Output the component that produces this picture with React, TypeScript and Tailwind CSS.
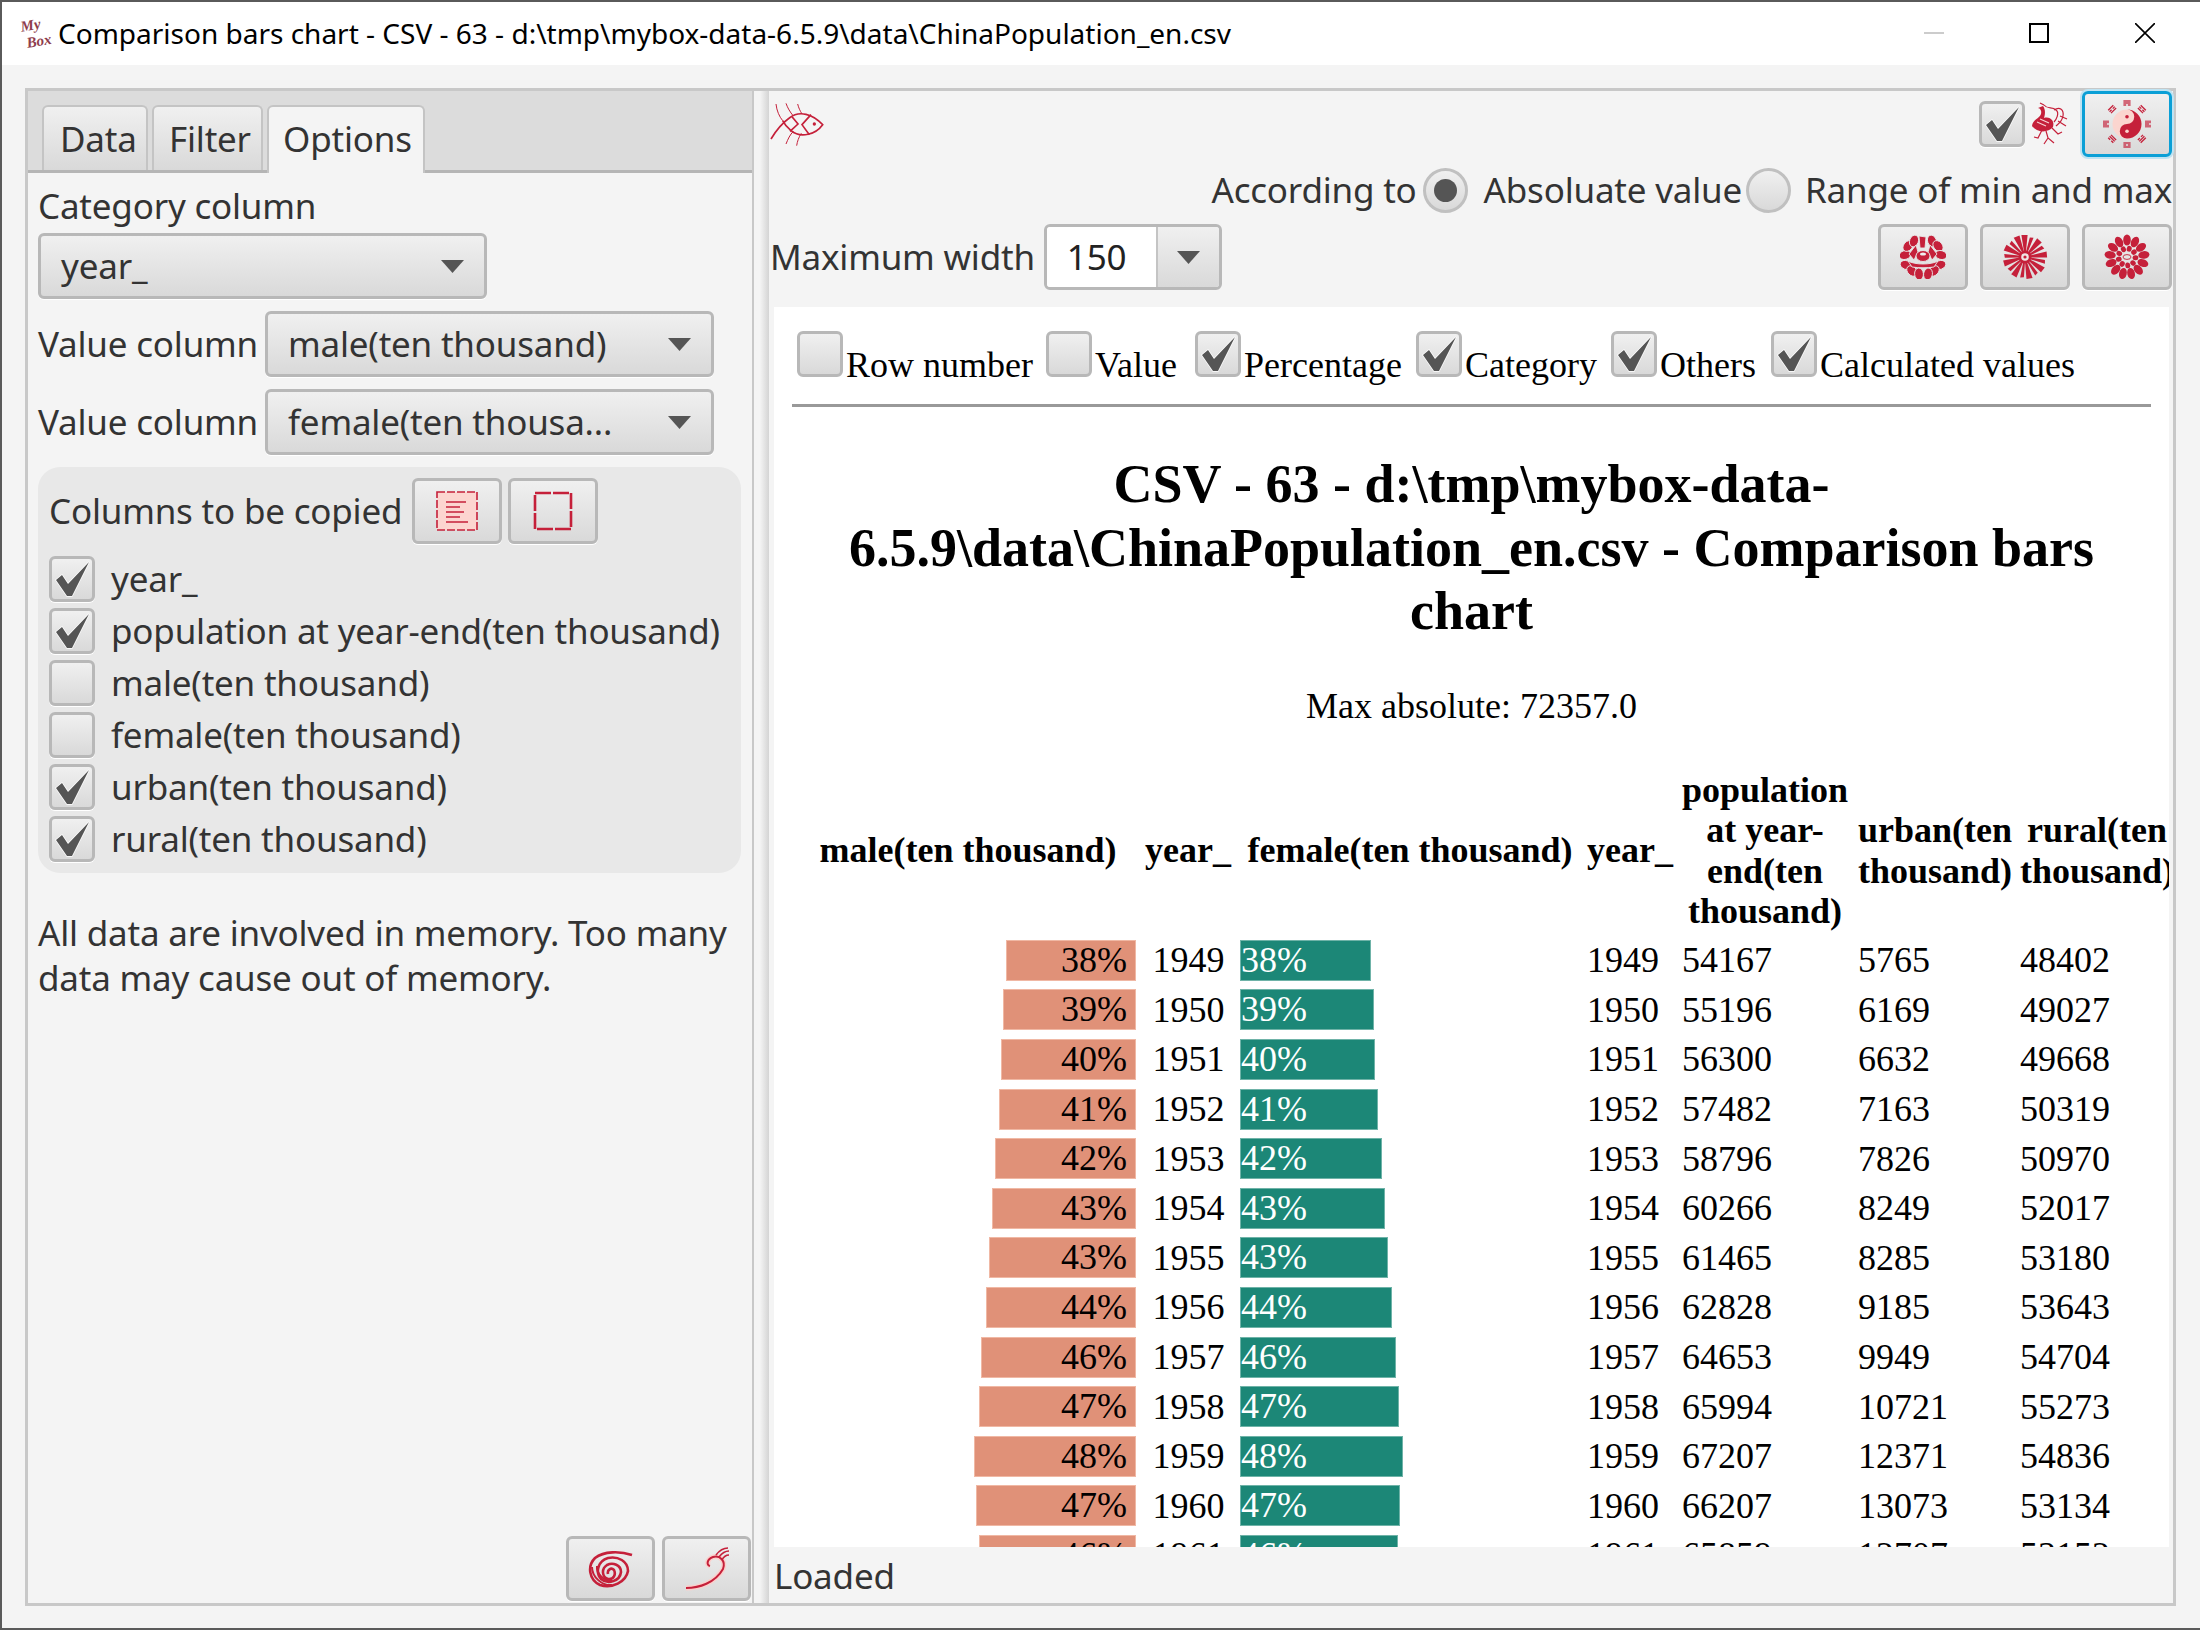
import type { ReactNode } from "react";

const red = "#c5203a";
const ui = "font-['Noto_Sans',sans-serif]";
const btn = "flex items-center justify-center rounded-[6px] border-[3px] border-[#b8b8b8] bg-linear-to-b from-[#f0f0f0] to-[#d9d9d9] shadow-[0_1px_0_#fff]";

const rows = [
  { year: 1949, pct: 38, male: 130, female: 131, pop: 54167, urban: 5765, rural: 48402 },
  { year: 1950, pct: 39, male: 133, female: 134, pop: 55196, urban: 6169, rural: 49027 },
  { year: 1951, pct: 40, male: 135, female: 135, pop: 56300, urban: 6632, rural: 49668 },
  { year: 1952, pct: 41, male: 137, female: 138, pop: 57482, urban: 7163, rural: 50319 },
  { year: 1953, pct: 42, male: 141, female: 142, pop: 58796, urban: 7826, rural: 50970 },
  { year: 1954, pct: 43, male: 144, female: 145, pop: 60266, urban: 8249, rural: 52017 },
  { year: 1955, pct: 43, male: 147, female: 148, pop: 61465, urban: 8285, rural: 53180 },
  { year: 1956, pct: 44, male: 150, female: 152, pop: 62828, urban: 9185, rural: 53643 },
  { year: 1957, pct: 46, male: 155, female: 156, pop: 64653, urban: 9949, rural: 54704 },
  { year: 1958, pct: 47, male: 157, female: 159, pop: 65994, urban: 10721, rural: 55273 },
  { year: 1959, pct: 48, male: 162, female: 163, pop: 67207, urban: 12371, rural: 54836 },
  { year: 1960, pct: 47, male: 160, female: 160, pop: 66207, urban: 13073, rural: 53134 },
  { year: 1961, pct: 46, male: 157, female: 158, pop: 65859, urban: 12707, rural: 53152 },
];

const Check = ({ on }: { on?: boolean }) => (
  <div className={`${btn} w-[46px] h-[46px] shrink-0`}>
    {on && (
      <svg width="40" height="40" viewBox="0 0 40 40">
        <path d="M4 21 L10 16 L16 25 L37 3 L20 37 L15 37 Z" fill="#555" stroke="#fff" strokeWidth="1.5" paintOrder="stroke" />
      </svg>
    )}
  </div>
);

const Arrow = () => (
  <svg width="23" height="13" viewBox="0 0 23 13" className="shrink-0">
    <path d="M0 0 H23 L11.5 13 Z" fill="#555" />
  </svg>
);

const Combo = ({ text, w }: { text: string; w: string }) => (
  <div className={`${btn} ${w} h-[66px] !justify-between pl-[20px] pr-[20px] text-[#333]`}>
    <span>{text}</span>
    <Arrow />
  </div>
);

const Radio = ({ on }: { on?: boolean }) => (
  <div className="flex items-center justify-center w-[45px] h-[45px] rounded-full border-[3px] border-[#c0c0c0] bg-linear-to-b from-[#f0f0f0] to-[#d9d9d9] shrink-0">
    {on && <div className="w-[23px] h-[23px] rounded-full bg-[#555]" />}
  </div>
);

const Fish = () => (
  <svg width="70" height="60" viewBox="0 0 210 180" fill="none" stroke={red} strokeWidth="5" className="-ml-[3px]">
    <path d="M15 135 C30 110 45 90 70 72 C100 48 140 60 170 92 C150 120 105 135 75 110 C65 102 55 90 50 80" />
    <path d="M30 30 C32 50 40 68 50 80" strokeWidth="3" />
    <path d="M60 28 C65 42 72 54 82 66" strokeWidth="3" />
    <path d="M95 30 C98 42 102 50 108 60" strokeWidth="3" />
    <path d="M78 68 L96 90 L72 112" />
    <path d="M135 62 L108 92 L130 122" />
    <path d="M60 150 C66 135 72 122 82 112" strokeWidth="3" />
    <path d="M92 155 C94 142 98 130 106 118" strokeWidth="3" />
    <circle cx="145" cy="90" r="5" fill={red} stroke="none" />
  </svg>
);

const Bird = () => (
  <svg width="38" height="44" viewBox="0 0 38 44" fill="none" stroke={red} strokeWidth="1.2" className="ml-[5px]">
    <path d="M2 24 C3 17 9 17 11 12 C12 9 10 6 8 6 L13 4 C16 8 15 13 14 16 C20 14 25 19 23 25 C18 31 7 31 2 24 Z" fill={red} stroke="none" />
    <path d="M10 1 L14 3 M14 3 C18 8 22 4 26 8 C30 11 26 18 24 20" />
    <path d="M24 8 C30 4 34 8 33 14 C32 20 28 22 26 24 M30 14 L37 17 M28 19 L36 24" />
    <path d="M12 28 L8 36 L4 35 M16 29 L18 36 L24 41 M18 36 L14 42 M22 26 L28 32 L32 30" />
    <path d="M7 20 L16 24 M10 17 L19 21" stroke="#f6d5d5" />
  </svg>
);

const trigrams = [0, 45, 90, 135, 180, 225, 270, 315];
const YinYang = () => (
  <svg width="64" height="64" viewBox="-32 -32 64 64">
    {trigrams.map((a, i) => (
      <g key={a} transform={`rotate(${a}) translate(0 -21)`} stroke={red} strokeWidth="1.3">
        {[-2, 0, 2].map((y, j) =>
          (i + j) % 3 === 2 ? (
            <g key={y}>
              <line x1="-3.6" x2="-0.8" y1={y} y2={y} />
              <line x1="0.8" x2="3.6" y1={y} y2={y} />
            </g>
          ) : (
            <line key={y} x1="-3.6" x2="3.6" y1={y} y2={y} />
          ),
        )}
      </g>
    ))}
    <circle r="14.5" fill="#fbd5cf" />
    <path d="M0 -14.5 A14.5 14.5 0 0 1 0 14.5 A7.25 7.25 0 0 1 0 0 A7.25 7.25 0 0 0 0 -14.5 Z" fill={red} />
    <circle cy="-7.25" r="1.8" fill={red} />
    <circle cy="7.25" r="1.8" fill="#fbd5cf" />
  </svg>
);

const Peony = () => (
  <svg width="46" height="44" viewBox="-23 -22 46 44" fill={red} stroke="#e8e8e8" strokeWidth="0.9">
    {[
      [-18, -2, 75], [-15, -11, 40], [-9, -16, 20], [9, -16, -20], [15, -11, -40], [18, -2, -75],
      [-17, 8, 110], [17, 8, -110], [-11, 14, 135], [11, 14, -135], [-4, 17, 175], [5, 17, -170],
    ].map(([x, y, a]) => (
      <ellipse key={`${x}${y}`} rx="4.4" ry="6" transform={`translate(${x} ${y}) rotate(${a})`} />
    ))}
    <path d="M-4 -21 L3 -20 L2 -9 L-3 -9 Z" />
    <path d="M-14 -3 L-7 -12 L-5 -5 L-9 3 Z M14 -3 L7 -12 L5 -5 L9 3 Z" />
    <path d="M-15 4 C-8 8 8 8 15 4 L11 10 C4 11 -4 11 -11 10 Z" />
    <ellipse cy="-1" rx="7" ry="5.5" />
    <ellipse cy="-3" rx="3" ry="1.6" fill="#eee" stroke="none" />
  </svg>
);

const Aster = () => (
  <svg width="46" height="46" viewBox="-23 -23 46 46" fill={red}>
    {Array.from({ length: 17 }, (_, i) => i * (360 / 17)).map((a, i) => (
      <path key={a} d={`M-0.8 -4 L-${i % 2 ? 2.6 : 3.6} -${i % 2 ? 20 : 22} L${i % 2 ? 1 : 2.6} -${i % 2 ? 21 : 22} L0.8 -4 Z`} transform={`rotate(${a})`} />
    ))}
    <circle r="6.5" />
    <circle r="3.8" fill="#efe6e6" />
    <circle r="1.6" />
  </svg>
);

const Dahlia = () => (
  <svg width="46" height="46" viewBox="-23 -23 46 46" fill={red}>
    {Array.from({ length: 13 }, (_, i) => i * (360 / 13)).map((a) => (
      <ellipse key={a} cy="-17" rx="3.8" ry="5.6" transform={`rotate(${a})`} />
    ))}
    {Array.from({ length: 9 }, (_, i) => i * 40 + 15).map((a) => (
      <ellipse key={a} cy="-8.5" rx="2.5" ry="2.9" transform={`rotate(${a})`} />
    ))}
    <ellipse rx="4" ry="2.4" fill="none" stroke={red} strokeWidth="0.9" />
  </svg>
);

const Spiral = () => (
  <svg width="46" height="38" viewBox="0 0 46 38" fill="none" stroke={red} strokeWidth="2.6">
    <path d="M44 5 C32 1 16 1 7 8 C-1 16 1 30 12 35 C24 39 38 32 40 21 C40 11 30 6 20 8 C10 11 7 22 13 29 C20 35 32 31 33 22 C33 15 25 12 19 15 C13 19 14 27 20 29 C26 30 28 24 26 20 C23 17 19 20 20 24" />
    <path d="M4 17 C4 27 14 36 24 35 M9 16 C8 24 16 31 24 31" strokeWidth="2" />
  </svg>
);

const Curl = () => (
  <svg width="44" height="44" viewBox="0 0 44 44" fill="none">
    <path d="M1 41 C14 41 30 36 38 22 C41 14 35 8 28 10 C22 12 21 18 25 19" stroke="#fbd0cc" strokeWidth="5" />
    <path d="M1 41 C14 41 30 36 38 22 C41 14 35 8 28 10 C22 12 21 18 25 19" stroke={red} strokeWidth="2" />
    <path d="M31 8 C34 4 38 1 43 1 M34 10 C37 6 40 4 44 4 M37 13 C39 9 41 8 44 8" stroke={red} strokeWidth="1.6" />
  </svg>
);

const Logo = () => (
  <div className="w-[36px] mr-[2px] flex flex-col font-['Liberation_Serif',serif] italic font-bold text-[15px] leading-[17px] text-[#8f3d4c] -rotate-[10deg]">
    <span className="pl-[2px]">My</span>
    <span className="pl-[5px]">Box</span>
  </div>
);

const Row = ({ label, children }: { label?: string; children: ReactNode }) => (
  <div className="flex items-center h-[66px] mt-[12px] ml-[10px]">
    {label && <span className="w-[227px]">{label}</span>}
    {children}
  </div>
);

const columns = [
  { name: "year_", on: true },
  { name: "population at year-end(ten thousand)", on: true },
  { name: "male(ten thousand)", on: false },
  { name: "female(ten thousand)", on: false },
  { name: "urban(ten thousand)", on: true },
  { name: "rural(ten thousand)", on: true },
];

const shown = [
  { name: "Row number", on: false, w: "w-[249px]" },
  { name: "Value", on: false, w: "w-[149px]" },
  { name: "Percentage", on: true, w: "w-[221px]" },
  { name: "Category", on: true, w: "w-[195px]" },
  { name: "Others", on: true, w: "w-[160px]" },
  { name: "Calculated values", on: true, w: "w-[310px]" },
];

const cols = "grid grid-cols-[336px_104px_340px_100px_170px_162px_200px]";

export default function App() {
  return (
    <div className={`${ui} flex flex-col w-[2200px] h-[1630px] bg-[#f4f4f4] border-t-2 border-l-2 border-b-2 border-[#5a5a5a] text-[#333] text-[35px] tracking-[-0.2px] overflow-hidden`}>
      {/* title bar */}
      <div className="flex items-center h-[63px] shrink-0 bg-white pl-[18px] pb-[2px] text-black text-[28px] tracking-normal">
        <Logo />
        <span>Comparison bars chart - CSV - 63 - d:\tmp\mybox-data-6.5.9\data\ChinaPopulation_en.csv</span>
        <div className="ml-auto flex items-center pr-[45px]">
          <div className="w-[20px] h-[2px] bg-[#ccc]" />
          <div className="ml-[85px] w-[20px] h-[20px] border-2 border-black" />
          <svg width="20" height="20" viewBox="0 0 20 20" className="ml-[86px]" stroke="#000" strokeWidth="1.6">
            <path d="M0 0 L20 20 M20 0 L0 20" />
          </svg>
        </div>
      </div>

      <div className="flex h-[1518px] ml-[23px] mr-[24px] mt-[23px] border-[3px] border-[#c8c8c8]">
        {/* left panel */}
        <aside className="flex flex-col w-[726px] shrink-0 h-full border-r-2 border-[#c8c8c8]">
          <div className="flex h-[82px] shrink-0 gap-[4px] pl-[14px] pt-[14px] bg-[#dcdcdc] border-b-[3px] border-[#b5b5b5]">
            <div className="w-[106px] h-[65px] pl-[16px] leading-[64px] rounded-t-[6px] border-[2px] border-b-0 border-[#c4c4c4] bg-linear-to-b from-[#f0f0f0] to-[#d9d9d9]">Data</div>
            <div className="w-[111px] h-[65px] pl-[15px] leading-[64px] rounded-t-[6px] border-[2px] border-b-0 border-[#c4c4c4] bg-linear-to-b from-[#f0f0f0] to-[#d9d9d9]">Filter</div>
            <div className="w-[158px] h-[68px] pl-[14px] leading-[64px] rounded-t-[6px] border-[2px] border-b-0 border-[#c4c4c4] bg-[#f4f4f4]">Options</div>
          </div>

          <div className="ml-[10px] h-[60px] pt-[6px] flex items-center">Category column</div>
          <div className="ml-[10px]">
            <Combo text="year_" w="w-[449px]" />
          </div>
          <Row label="Value column">
            <Combo text="male(ten thousand)" w="w-[449px]" />
          </Row>
          <Row label="Value column">
            <Combo text="female(ten thousa..." w="w-[449px]" />
          </Row>

          <section className="ml-[10px] mt-[12px] w-[703px] h-[406px] shrink-0 rounded-[22px] bg-[#e8e8e8] pl-[11px] pr-[12px] pt-[11px]">
            <div className="flex items-center h-[66px]">
              <span className="w-[363px]">Columns to be copied</span>
              <div className={`${btn} w-[90px] h-[66px]`}>
                <svg width="44" height="42" viewBox="0 0 44 42" fill="#fcd5d0" stroke={red}>
                  <rect x="2" y="2" width="40" height="38" strokeDasharray="8 2" strokeWidth="1.6" />
                  <path d="M11 12 H31 M11 17 H25 M11 22 H29 M11 27 H25 M11 32 H33" strokeWidth="1.6" />
                </svg>
              </div>
              <div className={`${btn} ml-[6px] w-[90px] h-[66px]`}>
                <svg width="40" height="40" viewBox="0 0 40 40" fill="none" stroke={red} strokeWidth="2.6">
                  <rect x="2" y="2" width="36" height="36" strokeDasharray="16 2" />
                </svg>
              </div>
            </div>
            <div className="flex flex-col gap-[6px] mt-[12px]">
              {columns.map((c) => (
                <div key={c.name} className="flex items-center h-[46px] gap-[16px] whitespace-nowrap">
                  <Check on={c.on} />
                  <span>{c.name}</span>
                </div>
              ))}
            </div>
          </section>

          <p className="ml-[10px] mt-[37px] w-[712px] leading-[45px]">All data are involved in memory. Too many data may cause out of memory.</p>

          <div className="mt-auto flex justify-end gap-[7px] pb-[2px] pr-[1px]">
            <div className={`${btn} w-[89px] h-[65px]`}><Spiral /></div>
            <div className={`${btn} w-[89px] h-[65px]`}><Curl /></div>
          </div>
        </aside>

        <div className="w-[15px] shrink-0 bg-linear-to-r from-[#f4f4f4] from-40% to-[#d4d4d4]" />

        {/* right panel */}
        <main className="flex flex-col flex-1 min-w-0 h-full">
          <div className="flex items-center h-[66px] shrink-0 pr-[1px]">
            <Fish />
            <div className="ml-auto flex items-center">
              <Check on />
              <Bird />
              <div className="ml-[14px] w-[90px] h-[66px] flex items-center justify-center rounded-[6px] border-[3px] border-[#0a9fd6] shadow-[0_0_0_2px_#bfe3f2] bg-linear-to-b from-[#f0f0f0] to-[#d9d9d9]">
                <YinYang />
              </div>
            </div>
          </div>

          <div className="flex items-center justify-end h-[45px] mt-[11px] shrink-0 pr-[1px] whitespace-nowrap">
            <span>According to</span>
            <div className="ml-[6px]"><Radio on /></div>
            <span className="ml-[16px]">Absoluate value</span>
            <div className="ml-[4px]"><Radio /></div>
            <span className="ml-[14px]">Range of min and max</span>
          </div>

          <div className="flex items-center h-[66px] mt-[11px] shrink-0 pr-[1px]">
            <span className="ml-[1px]">Maximum width</span>
            <div className="ml-[9px] flex w-[178px] h-[66px] rounded-[6px] border-[3px] border-[#b8b8b8] overflow-hidden">
              <div className="w-[109px] bg-white pl-[20px] leading-[60px] text-[#222]">150</div>
              <div className="flex-1 flex items-center justify-center border-l-2 border-[#c4c4c4] bg-linear-to-b from-[#f0f0f0] to-[#d9d9d9]"><Arrow /></div>
            </div>
            <div className="ml-auto flex gap-[12px]">
              <div className={`${btn} w-[90px] h-[66px]`}><Peony /></div>
              <div className={`${btn} w-[90px] h-[66px]`}><Aster /></div>
              <div className={`${btn} w-[90px] h-[66px]`}><Dahlia /></div>
            </div>
          </div>

          {/* html view */}
          <div className="mt-[17px] ml-[5px] mr-[4px] h-[1240px] shrink-0 bg-white overflow-hidden font-['Liberation_Serif',serif] text-black text-[36px] tracking-normal">
            <div className="flex items-end pl-[23px] pt-[24px]">
              {shown.map((s) => (
                <label key={s.name} className={`${s.w} shrink-0 flex items-end gap-[3px] leading-[40px] whitespace-nowrap`}>
                  <Check on={s.on} />
                  <span className="relative top-[8px]">{s.name}</span>
                </label>
              ))}
            </div>
            <div className="mt-[27px] mx-[18px] h-[3px] bg-[#999]" />
            <h1 className="mt-[46px] px-[32px] text-center font-bold text-[54px] leading-[63.5px]">
              CSV - 63 - d:\tmp\mybox-data-6.5.9\data\ChinaPopulation_en.csv - Comparison bars chart
            </h1>
            <p className="mt-[42px] text-center leading-[40px]">Max absolute: 72357.0</p>

            <div className="mt-[44px] ml-[26px] w-[1500px]">
              <div className={`${cols} h-[161px] mb-[5px] items-center font-bold text-center leading-[40.5px] whitespace-nowrap`}>
                <div>male(ten thousand)</div>
                <div>year_</div>
                <div>female(ten thousand)</div>
                <div>year_</div>
                <div>population<br />at year-<br />end(ten<br />thousand)</div>
                <div className="pl-[8px]"><div className="w-[154px]">urban(ten<br />thousand)</div></div>
                <div className="pl-[8px]"><div className="w-[154px]">rural(ten<br />thousand)</div></div>
              </div>
              {rows.map((r) => (
                <div key={r.year} className={`${cols} h-[49.6px] items-center`}>
                  <div className="flex justify-end">
                    <div className="h-[41px] pr-[8px] text-right leading-[39px] bg-[#e09178] border border-[#f0b8a4]" style={{ width: r.male }}>{r.pct}%</div>
                  </div>
                  <div className="text-center leading-[34px] pl-[1px]">{r.year}</div>
                  <div>
                    <div className="h-[41px] text-white leading-[39px] bg-[#1c8777] border border-[#6fb3a8]" style={{ width: r.female }}>{r.pct}%</div>
                  </div>
                  <div className="pl-[7px] leading-[34px]">{r.year}</div>
                  <div className="pl-[2px] leading-[34px]">{r.pop}</div>
                  <div className="pl-[8px] leading-[34px]">{r.urban}</div>
                  <div className="pl-[8px] leading-[34px]">{r.rural}</div>
                </div>
              ))}
            </div>
          </div>

          <div className="flex-1 flex items-center pl-[5px] pt-[3px]">Loaded</div>
        </main>
      </div>
    </div>
  );
}
